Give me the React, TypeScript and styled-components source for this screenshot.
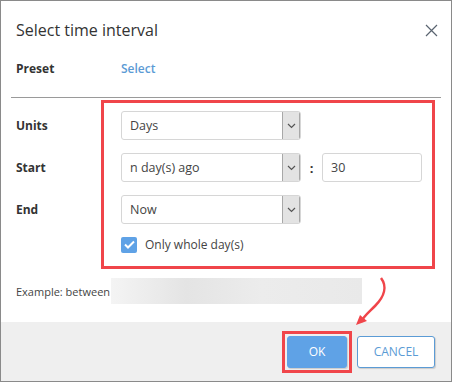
import styled, { createGlobalStyle } from "styled-components";

const Global = createGlobalStyle`
  html, body {
    margin: 0;
    padding: 0;
    background: #fff;
  }
  body {
    font-family: "Open Sans", "Noto Sans", "Liberation Sans", sans-serif;
    color: #333;
  }
`;

const Dialog = styled.div`
  position: relative;
  box-sizing: border-box;
  width: 452px;
  height: 382px;
  border: 1px solid #8a8a8a;
  display: flex;
  flex-direction: column;
  background: #fff;
`;

const Header = styled.div`
  display: flex;
  align-items: center;
  justify-content: space-between;
  padding: 14px 9px 0 15px;
  height: 30px;
`;

const Title = styled.h1`
  margin: 0;
  font-size: 16px;
  font-weight: 400;
  color: #333;
`;

const Close = styled.button`
  border: none;
  background: none;
  padding: 0;
  width: 22px;
  height: 22px;
  display: flex;
  align-items: center;
  justify-content: center;
  cursor: pointer;
`;

const Body = styled.div`
  flex: 1;
  padding: 0 10px;
`;

const Row = styled.div<{ $top?: number }>`
  display: flex;
  align-items: center;
  height: 29px;
  margin-top: ${(p) => p.$top ?? 13}px;
  padding-left: 5px;
`;

const Label = styled.div`
  width: 105px;
  font-size: 12px;
  font-weight: 700;
  color: #333;
`;

const Link = styled.a`
  font-size: 12px;
  font-weight: 600;
  color: #5b9bd5;
  text-decoration: none;
`;

const Divider = styled.hr`
  margin: 14px 0 0;
  border: none;
  border-top: 1px solid #9a9a9a;
`;

const Select = styled.div`
  box-sizing: border-box;
  width: 180px;
  height: 29px;
  border: 1px solid #d6d6d6;
  border-radius: 3px;
  display: flex;
  overflow: hidden;
`;

const SelectText = styled.div`
  flex: 1;
  padding-left: 8px;
  display: flex;
  align-items: center;
  font-size: 12.5px;
  color: #444;
`;

const SelectArrow = styled.div`
  width: 16px;
  background: #e3e3e3;
  border-left: 1px solid #a8a8a8;
  border-right: 1px solid #a8a8a8;
  display: flex;
  align-items: center;
  justify-content: center;
`;

const Colon = styled.span`
  width: 21px;
  text-align: center;
  font-size: 13px;
  font-weight: 700;
`;

const NumberInput = styled.div`
  box-sizing: border-box;
  width: 100px;
  height: 29px;
  border: 1px solid #d6d6d6;
  border-radius: 3px;
  padding-left: 8px;
  display: flex;
  align-items: center;
  font-size: 12.5px;
  color: #444;
`;

const CheckRow = styled.div`
  display: flex;
  align-items: center;
  gap: 8px;
  margin: 12px 0 0 110px;
  font-size: 12px;
  color: #444;
`;

const Checkbox = styled.span`
  width: 16px;
  height: 16px;
  border-radius: 2px;
  background: #5fa2e6;
  display: flex;
  align-items: center;
  justify-content: center;
`;

const Example = styled.div`
  display: flex;
  align-items: center;
  margin: 25px 0 0 5px;
  font-size: 11px;
  color: #444;
`;

const Blurred = styled.div`
  width: 251px;
  height: 26px;
  margin-left: 1px;
  background: linear-gradient(90deg, #f4f4f4 0%, #e4e4e4 30%, #ececec 60%, #e9e9e9 100%);
`;

const Footer = styled.div`
  height: 59px;
  background: #efefef;
  display: flex;
  align-items: center;
  justify-content: flex-end;
  gap: 5px;
  padding-right: 16px;
`;

const Highlight = styled.div`
  border: 3px solid #f0454a;
  padding: 2px;
  display: flex;
`;

const Button = styled.button<{ $primary?: boolean }>`
  box-sizing: border-box;
  height: 32px;
  width: ${(p) => (p.$primary ? 60 : 78)}px;
  border-radius: 3px;
  font-family: inherit;
  font-size: 12px;
  border: 1px solid ${(p) => (p.$primary ? "#5fa2e6" : "#5b9bd5")};
  background: ${(p) => (p.$primary ? "#5fa2e6" : "#fff")};
  color: ${(p) => (p.$primary ? "#fff" : "#5b9bd5")};
  box-shadow: 1px 1px 1px rgba(0, 0, 0, 0.15);
`;

const Annotation = styled.div`
  position: absolute;
  left: 100px;
  top: 99px;
  width: 334px;
  height: 169px;
  box-sizing: border-box;
  border: 3px solid #f0454a;
  pointer-events: none;
`;

const Arrow = styled.svg`
  position: absolute;
  left: 352px;
  top: 275px;
  pointer-events: none;
`;

function Chevron() {
  return (
    <svg width="9" height="6" viewBox="0 0 9 6">
      <path d="M1 1l3.5 3.5L8 1" fill="none" stroke="#555" strokeWidth="1.2" />
    </svg>
  );
}

function Dropdown({ value }: { value: string }) {
  return (
    <Select>
      <SelectText>{value}</SelectText>
      <SelectArrow>
        <Chevron />
      </SelectArrow>
    </Select>
  );
}

export default function App() {
  return (
    <>
      <Global />
      <Dialog>
        <Header>
          <Title>Select time interval</Title>
          <Close aria-label="Close">
            <svg width="13" height="13" viewBox="0 0 13 13">
              <path d="M1 1l11 11M12 1L1 12" stroke="#5a6470" strokeWidth="1.2" />
            </svg>
          </Close>
        </Header>
        <Body>
          <Row $top={9}>
            <Label>Preset</Label>
            <Link href="#">Select</Link>
          </Row>
          <Divider />
          <Row $top={13}>
            <Label>Units</Label>
            <Dropdown value="Days" />
          </Row>
          <Row>
            <Label>Start</Label>
            <Dropdown value="n day(s) ago" />
            <Colon>:</Colon>
            <NumberInput>30</NumberInput>
          </Row>
          <Row>
            <Label>End</Label>
            <Dropdown value="Now" />
          </Row>
          <CheckRow>
            <Checkbox>
              <svg width="11" height="9" viewBox="0 0 11 9">
                <path d="M1 4.5l3 3L10 1.5" fill="none" stroke="#fff" strokeWidth="2" />
              </svg>
            </Checkbox>
            Only whole day(s)
          </CheckRow>
          <Example>
            Example: between
            <Blurred />
          </Example>
        </Body>
        <Footer>
          <Highlight>
            <Button $primary>OK</Button>
          </Highlight>
          <Button>CANCEL</Button>
        </Footer>
        <Annotation />
        <Arrow width="40" height="52" viewBox="0 0 40 52">
          <path d="M28 2c6 8 4 18-6 28c-7 7-12 11-14 16" fill="none" stroke="#f0454a" strokeWidth="2.5" />
          <path d="M3 49l4-10l7 6z" fill="#f0454a" />
        </Arrow>
      </Dialog>
    </>
  );
}
